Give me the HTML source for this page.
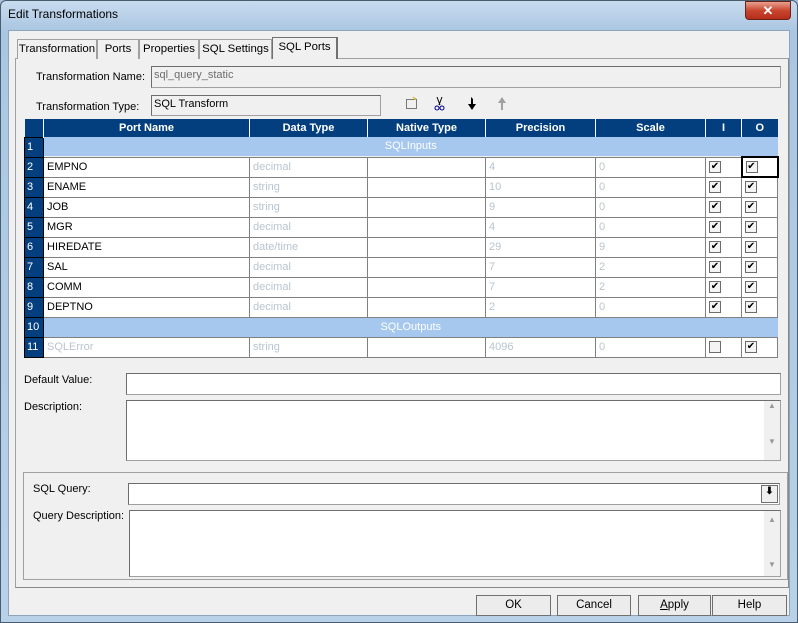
<!DOCTYPE html>
<html><head><style>
*{box-sizing:border-box;margin:0;padding:0}
body{width:798px;height:623px;overflow:hidden;background:#a9c3dd;font-family:"Liberation Sans",sans-serif;font-size:11px;color:#000;position:relative}
.a{position:absolute}
.frame{left:0;top:0;width:798px;height:623px;background:linear-gradient(#c9dcef,#aac6e2 30px,#b9d1e8);border:1px solid #4a5c70;border-radius:6px 6px 0 0}
.client{left:8px;top:30px;width:782px;height:586px;background:#f0f0f0;border:1px solid #8ea4bb}
.inp{background:#fff;border:1px solid #a0a0a0;border-top-color:#6d6d6d;border-left-color:#6d6d6d}
.ro{background:#f0f0f0;border:1px solid #a0a0a0;border-top-color:#6d6d6d;border-left-color:#6d6d6d;color:#6d6d6d;padding:2px}
.tab{top:39px;height:20px;border:1px solid #a0a0a0;border-bottom:none;background:#f0f0f0;text-align:center;line-height:19px;font-size:11.4px}
.btn{top:595px;height:21px;border:1px solid #707070;background:#ececec;text-align:center;line-height:19px;font-size:11.5px}
table{border-collapse:collapse;table-layout:fixed}
td{height:20px;border:1px solid #808080;padding:0 3px 1px;font-size:11px;white-space:nowrap;overflow:hidden;background:#fff}
th{height:18px;background:#033f7e;color:#fff;font-size:11px;border-left:1px solid #fff;font-weight:bold}
td.n{background:#033f7e;color:#fff;border:1px solid #000;padding-left:2px;padding-bottom:0}
.g{color:#b8c4d0}
.sec td.s{background:#a6c8ee;color:#fff;text-align:center;border:none}
.cb{display:inline-block;width:12px;height:12px;border:1px solid #6d6d6d;background:#f4f4f4;font-size:10px;line-height:10px;text-align:center;vertical-align:middle;margin-left:0}
</style></head><body>
<div class="a frame"></div>
<div class="a" style="left:8px;top:7px;font-size:12px;">Edit Transformations</div>
<div class="a" style="left:745px;top:1px;width:46px;height:19px;border-radius:0 0 4px 4px;background:linear-gradient(#e8a090,#c9452e 50%,#b52e1a);border:1px solid #6b2318;color:#fff;text-align:center;font-weight:bold;font-size:13px;line-height:17px">✕</div>
<div class="a client"></div>
<div class="a" style="left:15px;top:58px;width:774px;height:530px;border:1px solid #a0a0a0;border-right-color:#888;border-bottom-color:#888"></div>
<div class="a tab" style="left:17px;width:80px">Transformation</div>
<div class="a tab" style="left:97px;width:42px">Ports</div>
<div class="a tab" style="left:139px;width:60px">Properties</div>
<div class="a tab" style="left:199px;width:73px">SQL Settings</div>
<div class="a tab" style="left:272px;top:37px;height:22px;width:66px;border-color:#707070;border-right:2px solid #707070">SQL Ports</div>
<div class="a" style="left:36px;top:71px">Transformation Name:</div>
<div class="a ro" style="left:151px;top:66px;width:630px;height:22px">sql_query_static</div>
<div class="a" style="left:36px;top:101px">Transformation Type:</div>
<div class="a ro" style="left:151px;top:95px;width:230px;height:21px;color:#000">SQL Transform</div>
<svg class="a" style="left:404px;top:96px" width="110" height="16">
<rect x="2.5" y="3.5" width="10" height="9" fill="none" stroke="#000" stroke-dasharray="1,1"/>
<path d="M9 1l2 2M12 2l-1 2" stroke="#c8b000"/>
<path d="M33 1l3 8M38 1l-3 8" stroke="#000"/><circle cx="33" cy="12" r="2" fill="none" stroke="#00008b"/><circle cx="38" cy="12" r="2" fill="none" stroke="#00008b"/>
<path d="M67 1v7h-3l4 6 4-6h-3V3z" fill="#000"/>
<path d="M97 14V7h-3l4-6 4 6h-3v7z" fill="#a0a0a0"/>
</svg>
<div class="a" style="left:24px;top:119px;width:753px;height:243px;background:#f0f0f0">
<table style="width:753px">
<colgroup><col style="width:19px"><col style="width:206px"><col style="width:118px"><col style="width:118px"><col style="width:110px"><col style="width:110px"><col style="width:36px"><col style="width:36px"></colgroup>
<tr><th style="border-left:none"></th><th>Port Name</th><th>Data Type</th><th>Native Type</th><th>Precision</th><th>Scale</th><th>I</th><th>O</th></tr>
<tr class="sec"><td class="n">1</td><td class="s" colspan="7">SQLInputs</td></tr>
<tr><td class="n">2</td><td>EMPNO</td><td class="g">decimal</td><td></td><td class="g">4</td><td class="g">0</td><td><span class="cb">✔</span></td><td style="border:2px solid #000"><span class="cb">✔</span></td></tr>
<tr><td class="n">3</td><td>ENAME</td><td class="g">string</td><td></td><td class="g">10</td><td class="g">0</td><td><span class="cb">✔</span></td><td><span class="cb">✔</span></td></tr>
<tr><td class="n">4</td><td>JOB</td><td class="g">string</td><td></td><td class="g">9</td><td class="g">0</td><td><span class="cb">✔</span></td><td><span class="cb">✔</span></td></tr>
<tr><td class="n">5</td><td>MGR</td><td class="g">decimal</td><td></td><td class="g">4</td><td class="g">0</td><td><span class="cb">✔</span></td><td><span class="cb">✔</span></td></tr>
<tr><td class="n">6</td><td>HIREDATE</td><td class="g">date/time</td><td></td><td class="g">29</td><td class="g">9</td><td><span class="cb">✔</span></td><td><span class="cb">✔</span></td></tr>
<tr><td class="n">7</td><td>SAL</td><td class="g">decimal</td><td></td><td class="g">7</td><td class="g">2</td><td><span class="cb">✔</span></td><td><span class="cb">✔</span></td></tr>
<tr><td class="n">8</td><td>COMM</td><td class="g">decimal</td><td></td><td class="g">7</td><td class="g">2</td><td><span class="cb">✔</span></td><td><span class="cb">✔</span></td></tr>
<tr><td class="n">9</td><td>DEPTNO</td><td class="g">decimal</td><td></td><td class="g">2</td><td class="g">0</td><td><span class="cb">✔</span></td><td><span class="cb">✔</span></td></tr>
<tr class="sec"><td class="n">10</td><td class="s" colspan="7">SQLOutputs</td></tr>
<tr><td class="n">11</td><td class="g">SQLError</td><td class="g">string</td><td></td><td class="g">4096</td><td class="g">0</td><td><span class="cb"></span></td><td><span class="cb">✔</span></td></tr>
</table></div>
<div class="a" style="left:24px;top:374px">Default Value:</div>
<div class="a inp" style="left:126px;top:373px;width:655px;height:22px"></div>
<div class="a" style="left:24px;top:401px">Description:</div>
<div class="a inp" style="left:126px;top:400px;width:655px;height:61px"><div class="a" style="right:0;top:0;width:16px;height:59px;background:#f0f0f0;color:#999;font-size:8px;text-align:center">▲<br><br><br><br>▼</div></div>
<div class="a" style="left:23px;top:472px;width:765px;height:108px;border:1px solid #a0a0a0"></div>
<div class="a" style="left:33px;top:483px">SQL Query:</div>
<div class="a inp" style="left:128px;top:483px;width:652px;height:22px"><div class="a" style="right:1px;top:1px;width:17px;height:18px;border:1px solid #707070;background:#f0f0f0;text-align:center;font-size:10px;font-weight:bold">⬇</div></div>
<div class="a" style="left:33px;top:510px">Query Description:</div>
<div class="a inp" style="left:129px;top:510px;width:652px;height:67px"><div class="a" style="right:0;top:0;width:16px;height:65px;background:#f0f0f0;color:#999;font-size:8px;text-align:center;padding-top:4px">▲<br><br><br><br><br>▼</div></div>
<div class="a btn" style="left:476px;width:75px">OK</div>
<div class="a btn" style="left:557px;width:74px">Cancel</div>
<div class="a btn" style="left:638px;width:73px"><u>A</u>pply</div>
<div class="a btn" style="left:712px;width:75px">Help</div>
</body></html>
